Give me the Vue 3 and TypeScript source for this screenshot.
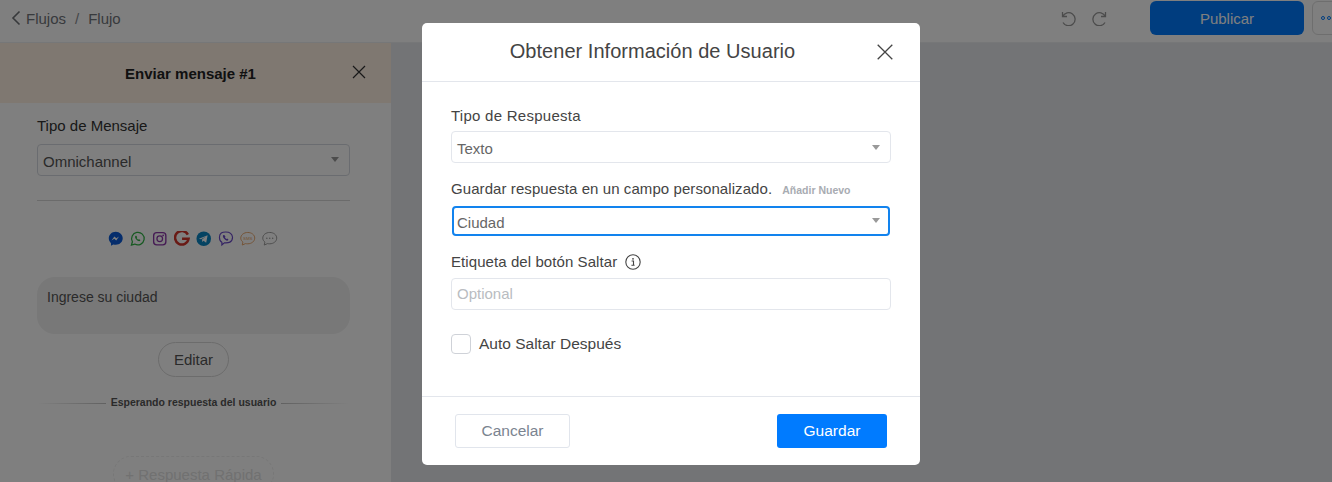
<script setup lang="ts">
const fields = { title: 'Obtener Información de Usuario' }
</script>

<template>
  <div class="page">
    <header class="topbar">
      <div class="crumbs">
        <svg class="back" width="10" height="16" viewBox="0 0 10 16"><path d="M8.500 1.500 2 8l6.500 6.500" fill="none" stroke="#6f7276" stroke-width="1.600" /></svg>
        <span>Flujos</span><span class="slash">/</span><span>Flujo</span>
      </div>
      <div class="actions">
        <svg class="hist" width="16" height="16" viewBox="0 0 16 16"><path d="M2.500 2v4.500H7M2.700 6.500A6.500 6.500 0 1 1 3 12.500" fill="none" stroke="#999" stroke-width="1.300" /></svg>
        <svg class="hist redo" width="16" height="16" viewBox="0 0 16 16"><path d="M13.500 2v4.500H9M13.300 6.500A6.500 6.500 0 1 0 13 12.500" fill="none" stroke="#999" stroke-width="1.300" /></svg>
        <button class="publish">Publicar</button>
        <button class="more"><i></i><i></i><i></i></button>
      </div>
    </header>

    <div class="workspace">
      <aside class="side">
        <div class="side-head">
          <b>Enviar mensaje #1</b>
          <svg class="side-x" width="14" height="14" viewBox="0 0 14 14"><path d="M1 1l12 12M13 1 1 13" stroke="#333" stroke-width="1.200" /></svg>
        </div>
        <div class="side-body">
          <div class="side-label">Tipo de Mensaje</div>
          <div class="side-select">Omnichannel<span class="caret"></span></div>
          <hr class="side-rule" />
          <div class="channels">
            <svg viewBox="0 0 16 16"><path d="M8 .8C3.900.8.800 3.800.800 7.600c0 2 .9 3.800 2.300 5v2.700l2.400-1.400c.8.300 1.600.4 2.500.4 4.100 0 7.200-3 7.200-6.700S12.100.8 8 .8z" fill="#0a5bd8" /><path d="m3.600 9.800 3-4.200 2 2 2.800-2-2.900 4.300-2-2z" fill="#fff" /></svg>
            <svg viewBox="0 0 16 16"><path d="M1.500 14.500l1-3.400a6.500 6.500 0 1 1 2.400 2.400z" fill="none" stroke="#2fb344" stroke-width="1.300" /><path d="M5.700 4.800c-.8.800-.6 2.200.6 3.700 1.300 1.600 2.900 2.300 3.900 1.800l.6-1-1.500-.9-.6.500c-.6-.2-1.500-1.100-1.800-1.800l.5-.6-.8-1.600z" fill="#2fb344" /></svg>
            <svg viewBox="0 0 16 16"><rect x="1.700" y="1.700" width="12.600" height="12.600" rx="3.200" fill="none" stroke="#8a35a8" stroke-width="1.400" /><circle cx="8" cy="8" r="2.900" fill="none" stroke="#8a35a8" stroke-width="1.300" /><circle cx="11.500" cy="4.500" r=".9" fill="#8a35a8" /></svg>
            <svg viewBox="0 0 16 16"><path d="M14.300 3.700A7 7 0 1 0 15 8.100H8.300" fill="none" stroke="#d2352b" stroke-width="2.600" /></svg>
            <svg viewBox="0 0 16 16"><circle cx="8" cy="8" r="7.500" fill="#0a86c4" /><path d="M3 8l9-3.600-1.500 7.600-2.700-2-1.300 1.300-.3-2.400 4-3.200-5 2.800z" fill="#fff" /></svg>
            <svg viewBox="0 0 16 16"><path d="M8 1c-3.700 0-6.500.9-6.500 5.500 0 2.800.7 4.300 2.500 5.200v2.800l2.600-2.300c4 .3 8.400-.3 8.400-5.700C14.500 1.900 11.700 1 8 1z" fill="none" stroke="#6a48c8" stroke-width="1.200" /><path d="M5.500 4c-.9.700-.5 2.200.6 3.700C7.300 9.300 9 10.400 10.200 9.800l.6-1-1.300-1-.7.500c-.6-.3-1.400-1.200-1.600-1.900l.5-.6-.9-1.500z" fill="#6a48c8" /></svg>
            <svg viewBox="0 0 16 16"><path d="M8 1.500c-4 0-7.200 2.500-7.200 5.800 0 1.700.8 3.100 2.200 4.200L2.300 14.500l3.400-1.500c.7.200 1.500.2 2.300.2 4 0 7.200-2.600 7.200-5.900S12 1.500 8 1.500z" fill="none" stroke="#e8a56a" stroke-width="1" /><text x="8" y="9.200" text-anchor="middle" class="sms">SMS</text></svg>
            <svg viewBox="0 0 16 16"><path d="M8 1.500c-4 0-7.200 2.500-7.200 5.800 0 1.700.8 3.100 2.200 4.200L2.300 14.500l3.400-1.500c.7.200 1.500.2 2.300.2 4 0 7.200-2.600 7.200-5.900S12 1.500 8 1.500z" fill="none" stroke="#9a9a9a" stroke-width="1" /><circle cx="5" cy="7.400" r=".8" fill="#9a9a9a" /><circle cx="8" cy="7.400" r=".8" fill="#9a9a9a" /><circle cx="11" cy="7.400" r=".8" fill="#9a9a9a" /></svg>
          </div>
          <div class="bubble">Ingrese su ciudad</div>
          <button class="edit">Editar</button>
          <div class="waiting"><span>Esperando respuesta del usuario</span></div>
          <button class="quick">+ Respuesta Rápida</button>
        </div>
      </aside>
      <main class="canvas"></main>
    </div>

    <div class="overlay">
      <section class="modal">
        <header class="modal-head">
          <h2>{{ fields.title }}</h2>
          <svg class="modal-x" width="16" height="16" viewBox="0 0 16 16"><path d="M.7.7l14.600 14.600M15.300.7.700 15.300" stroke="#444" stroke-width="1.300" /></svg>
        </header>
        <div class="modal-body">
          <label class="lbl first">Tipo de Respuesta</label>
          <div class="field">Texto<span class="caret"></span></div>
          <label class="lbl second">Guardar respuesta en un campo personalizado.<small>Añadir Nuevo</small></label>
          <div class="field focus">Ciudad<span class="caret"></span></div>
          <label class="lbl third">Etiqueta del botón Saltar
            <svg class="info" width="16" height="16" viewBox="0 0 16 16"><circle cx="8" cy="8" r="7.200" fill="none" stroke="#444" stroke-width="1.100" /><circle cx="8" cy="4.800" r=".9" fill="#444" /><path d="M6.600 7h1.900v4M6.400 11.200h3.200" fill="none" stroke="#444" stroke-width="1.100" /></svg>
          </label>
          <div class="field placeholder">Optional</div>
          <div class="check"><span class="box"></span>Auto Saltar Después</div>
        </div>
        <footer class="modal-foot">
          <button class="cancel">Cancelar</button>
          <button class="save">Guardar</button>
        </footer>
      </section>
    </div>
  </div>
</template>

<style>
html, body { margin: 0; padding: 0; }
</style>

<style scoped>
.page {
  position: relative;
  width: 1332px;
  height: 482px;
  overflow: hidden;
  background: #e6e8ec;
  font-family: "Liberation Sans", Arial, sans-serif;
  color: #333;
  display: flex;
  flex-direction: column;
}
button { font-family: inherit; cursor: pointer; }
.topbar {
  height: 43px;
  flex: none;
  box-sizing: border-box;
  background: #fff;
  border-bottom: 1px solid #eceef1;
  display: flex;
  justify-content: space-between;
  padding: 1px 0 0 11px;
}
.crumbs { display: flex; align-items: center; height: 34px; font-size: 15px; color: #70747a; }
.back { margin-right: 5px; }
.slash { margin: 0 9px; color: #8a8d92; }
.actions { display: flex; align-items: flex-start; width: 272px; flex: none; }
.actions > * { flex: none; }
.hist { margin-top: 9px; }
.redo { margin-left: 16px; }
.publish {
  width: 154px; height: 34px; margin-left: 42px;
  border: 0; border-radius: 6px; background: #007bff; color: #fff; font-size: 15px; padding: 0;
}
.more {
  width: 60px; height: 34px; margin-left: 8px;
  border: 1px solid #ddd; border-radius: 6px; background: #fff;
  display: flex; gap: 2px; padding: 0 0 0 8px; align-items: center;
}
.more i { width: 4px; height: 4px; border-radius: 50%; border: 1px solid #007bff; box-sizing: border-box; }
.workspace { flex: 1; display: flex; min-height: 0; }
.side { width: 391px; flex: none; background: #fff; }
.side-head {
  height: 60px; background: #fef0e3; position: relative;
  display: flex; align-items: center; justify-content: center;
  font-size: 15px; color: #222; padding-right: 10px; box-sizing: border-box;
}
.side-x { position: absolute; left: 352px; top: 22px; }
.side-body { padding: 14px 41px 0 37px; display: flex; flex-direction: column; align-items: stretch; }
.side-label { font-size: 15px; line-height: 18px; color: #333; }
.side-select {
  margin-top: 9px; height: 32px; box-sizing: border-box;
  border: 1px solid #d5d9e0; border-radius: 4px; padding: 0 5px;
  font-size: 15px; line-height: 33px; color: #555; position: relative;
}
.side-select .caret { top: 12px; right: 10px; }
.side-rule { margin: 24px 0 0; border: 0; border-top: 1px solid #d6d6d6; width: 100%; }
.channels { margin: 30px 0 0 71px; display: flex; gap: 6.500px; height: 16px; }
.channels svg { width: 15.500px; height: 15.500px; flex: none; }
.sms { font-size: 4.500px; fill: #e8a56a; font-family: "Liberation Sans", sans-serif; }
.bubble {
  margin-top: 30px; height: 57px; box-sizing: border-box;
  background: #f0f0f0; border-radius: 18px; padding: 12px 10px;
  font-size: 14px; line-height: 16px; color: #555;
}
.edit {
  align-self: flex-start; margin: 8px 0 0 121px; width: 71px; height: 35px;
  border: 1px solid #d8d8d8; border-radius: 18px; background: #fff; color: #555; font-size: 15px; padding: 0;
}
.waiting {
  margin-top: 17px; height: 18px; display: flex; justify-content: center; align-items: center;
  background: linear-gradient(90deg, #fff 0%, #bbb 25%, #bbb 75%, #fff 100%) center / 100% 1px no-repeat;
}
.waiting span {
  background: #fff; padding: 0 5px; font-size: 10.500px; line-height: 18px; font-weight: 700; color: #555;
  margin-top: -3px;
}
.quick {
  align-self: flex-start; margin: 44px 0 0 76px; width: 161px; height: 36px; padding: 0;
  border: 1px dashed #efefef; border-radius: 18px; background: #fff; color: #e2e2e2; font-size: 15px;
}
.overlay {
  position: absolute; inset: 0; background: rgba(0, 0, 0, .5);
  display: flex; align-items: flex-start; justify-content: flex-start; padding: 23px 0 0 422px;
}
.modal {
  width: 498px; height: 442px; box-sizing: border-box; background: #fff; border-radius: 5px;
  display: flex; flex-direction: column; color: #444;
}
.modal-head {
  height: 59px; flex: none; box-sizing: border-box; border-bottom: 1px solid #e3e6ec;
  display: flex; align-items: center; justify-content: center; position: relative; padding-bottom: 1px;
}
.modal-head h2 { margin: 0 37px 0 0; font-size: 20px; font-weight: 400; color: #444; letter-spacing: .03px; }
.modal-x { position: absolute; left: 455px; top: 21px; }
.modal-body { flex: 1; padding: 24px 29px 0; display: flex; flex-direction: column; align-items: stretch; }
.lbl { font-size: 15px; line-height: 20px; color: #444; display: flex; align-items: center; height: 20px; }
.lbl.first { letter-spacing: .26px; }
.lbl.second { margin-top: 16px; letter-spacing: .08px; }
.lbl.second small { font-size: 10.500px; font-weight: 700; color: #a8acb2; margin: 1px 0 0 10px; letter-spacing: 0; }
.lbl.third { margin-top: 16px; letter-spacing: .08px; }
.info { margin-left: 8px; }
.field {
  margin-top: 5px; height: 32px; box-sizing: border-box;
  border: 1px solid #e3e6ec; border-radius: 4px; padding: 0 5px;
  font-size: 15px; line-height: 33px; color: #666; position: relative;
}
.field.focus {
  border: 2px solid #1283ee; height: 30px; line-height: 29px; margin: 7px 1px 0; padding: 0 3px;
}
.lbl.third + .field { margin-top: 6px; line-height: 30px; }
.placeholder { color: #b9bcc1; }
.caret {
  position: absolute; right: 10px; top: 13px; width: 0; height: 0;
  border-left: 4.500px solid transparent; border-right: 4.500px solid transparent; border-top: 5px solid #999;
}
.focus .caret { top: 10px; right: 8px; }
.check { display: flex; align-items: center; margin-top: 24px; font-size: 15.500px; color: #444; }
.box {
  width: 20px; height: 20px; box-sizing: border-box; border: 1px solid #cfd2d8; border-radius: 4px; margin-right: 8px;
}
.modal-foot {
  height: 69px; flex: none; box-sizing: border-box; border-top: 1px solid #e3e6ec;
  display: flex; justify-content: space-between; align-items: flex-start; padding: 17px 33px 0;
}
.cancel {
  width: 115px; height: 34px; background: #fff; border: 1px solid #e1e5ec; border-radius: 3px;
  color: #7b8490; font-size: 15.500px; padding: 0;
}
.save {
  width: 110px; height: 34px; background: #007bff; border: 0; border-radius: 3px;
  color: #fff; font-size: 15.500px; padding: 0;
}
</style>
